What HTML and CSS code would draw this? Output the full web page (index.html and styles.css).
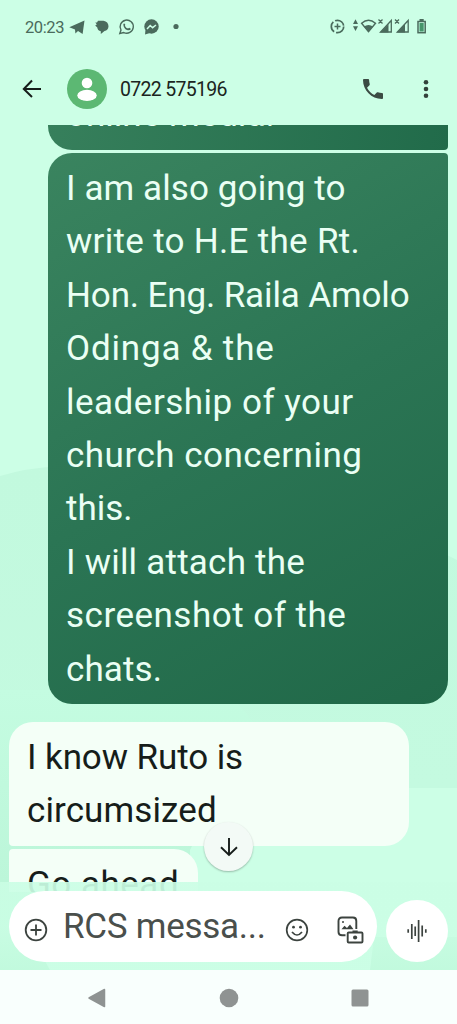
FILE: index.html
```html
<!DOCTYPE html>
<html lang="en">
<head>
<meta charset="utf-8">
<title>Messages</title>
<link rel="stylesheet" href="styles.css">
</head>
<body>
<div class="phone">
  <svg class="wallpaper" viewBox="0 0 457 1024">
    <defs>
      <linearGradient id="blob" x1="0" y1="0" x2="0" y2="1"><stop offset="0" stop-color="#c2f9de"/><stop offset="1" stop-color="#c4fae0"/></linearGradient>
      <linearGradient id="left" x1="0" y1="0" x2="0" y2="1"><stop offset="0" stop-color="#c4fce1"/><stop offset="1" stop-color="#bcf6d9"/></linearGradient>
    </defs>
    <path d="M0 476Q26 468 60 466C200 466 340 500 457 560V788H400L250 722Q240 708 230 703L0 700Z" fill="url(#blob)"/>
    <path d="M0 690H218Q240 702 254 724L190 850V882H0Z" fill="url(#left)"/>
    <path d="M0 882H60Q20 920 50 970H0Z" fill="#a9efc9"/>
    <path d="M374 937H457V970H370Z" fill="#a9efc9"/>
  </svg>
  <header class="status">
    <span class="clock">20:23</span>
    <svg class="status-left" viewBox="68 15 115 24">
      <g fill="#4a6b5c">
        <path d="M69.300 27.200L84.500 20.500L82.600 34L78 31.100L75.400 33.500L75 29.400Z"/>
        <path d="M98 20.700H103.500Q108.300 21.500 108.500 26.200Q108.200 30.500 104.500 31L100.800 34V31.200Q97.500 30.500 97.300 27.500L95.200 25.500L96.800 24.600L95.300 22.600H97Z"/>
        <circle cx="151.500" cy="26.500" r="7.200"/><path d="M145.500 30L145 34.500L150 33Z"/>
        <circle cx="176" cy="26.500" r="2.600"/>
      </g>
      <path d="M119.800 33.500L121 30A6.600 6.600 0 1 1 123.800 32.600Z" fill="none" stroke="#4a6b5c" stroke-width="1.400"/>
      <path d="M123.300 24.200Q124 22.800 125.200 24.300L125 26Q126 28 128 28.600L129.300 27.800L131 29Q129.500 31 127 30Q123.500 28.500 123.300 24.200Z" fill="#4a6b5c"/>
      <path d="M147 29L150.200 25.500L152.600 27.700L156 25" fill="none" stroke="#cdffe7" stroke-width="1.500"/>
    </svg>
    <svg class="status-right" viewBox="328 15 102 24">
      <g fill="none" stroke="#4a6b5c" stroke-width="1.500">
        <circle cx="337.500" cy="26.500" r="6.200" stroke-width="1.700" stroke-dasharray="11 2"/>
        <path d="M334.500 26.500H340.500M337.500 23.500V29.500"/>
        <path d="M361.600 23.300Q368.500 17 375.500 23.300L368.500 31.700Z" stroke-width="1.400"/>
        <path d="M378.500 19.500L382.500 23.500M382.500 19.500L378.500 23.500M395 19.500L399 23.500M399 19.500L395 23.500" stroke-width="1.300"/>
        <path d="M380.500 32H391.300V20.500ZM397.300 32H408.200V20.500Z" stroke-width="1.300"/>
        <rect x="418" y="21.500" width="7.200" height="11.200" stroke-width="1.500"/>
      </g>
      <g fill="#4a6b5c">
        <path d="M353 24L355.500 19.300L358 24ZM353 26.300H358L355.500 31Z"/>
        <path d="M363.800 26.500Q368.500 23.500 373.200 26.500L368.500 32Z"/>
        <path d="M380 32.500L388.500 24V32.500ZM397 32.500L405 24V32.500Z"/>
        <path d="M419.500 19H423.700V21.500H419.500Z"/>
      </g>
      <path d="M419.500 23H423.700V31.500H419.500Z" fill="#45946a"/>
    </svg>
  </header>
  <div class="appbar">
    <svg class="back" viewBox="0 0 20 20"><path d="M19 10H2M10 1.500L1.800 10L10 18" fill="none" stroke="#161d1a" stroke-width="2"/></svg>
    <svg class="avatar" viewBox="0 0 40 40"><circle cx="20" cy="20" r="20" fill="#5cb873"/><circle cx="20" cy="14" r="5.300" fill="#fff"/><ellipse cx="20" cy="26.400" rx="9.700" ry="5.600" fill="#fff"/></svg>
    <span class="name">0722 575196</span>
    <svg class="call" viewBox="3 3 18 18"><path fill="#3b4b43" d="M6.620 10.790c1.440 2.830 3.760 5.140 6.590 6.590l2.200-2.200c.27-.27.67-.36 1.020-.24 1.120.37 2.330.57 3.570.57.550 0 1 .45 1 1V20c0 .55-.45 1-1 1-9.390 0-17-7.610-17-17 0-.55.450-1 1-1h3.500c.55 0 1 .45 1 1 0 1.250.2 2.450.57 3.570.110.350.030.740-.25 1.020z"/></svg>
    <svg class="more" viewBox="0 0 6 20"><g fill="#33423b"><circle cx="3" cy="3.200" r="2.300"/><circle cx="3" cy="10" r="2.300"/><circle cx="3" cy="16.800" r="2.300"/></g></svg>
  </div>
  <main class="chat">
    <div class="bubble sent first"><p>online media.</p></div>
    <div class="bubble sent second">
      <p class="l1">I am also going to</p><p class="l2">write to H.E the Rt.</p><p class="l3">Hon. Eng. Raila Amolo</p><p class="l4">Odinga &amp; the</p><p class="l5">leadership of your</p><p class="l6">church concerning</p><p>this.</p><p class="l8">I will attach the</p><p class="l9">screenshot of the</p><p class="l1">chats.</p>
    </div>
    <div class="bubble got third"><p class="r1">I know Ruto is</p><p class="r2">circumsized</p></div>
    <div class="bubble got fourth"><p class="r3">Go ahead</p></div>
    <div class="jump"><svg viewBox="0 0 20 20"><path d="M10 1V18M2 10.300L10 18L18 10.300" fill="none" stroke="#161d1a" stroke-width="1.900"/></svg></div>
  </main>
  <footer class="composer">
    <div class="field">
      <svg class="plus" viewBox="0 0 24 24"><g fill="none" stroke="#3c433f" stroke-width="1.800"><circle cx="12" cy="12" r="10.300"/><path d="M6.500 12H17.500M12 6.500V17.500"/></g></svg>
      <span class="hint">RCS messa...</span>
      <svg class="smile" viewBox="0 0 24 24"><g fill="none" stroke="#3c433f" stroke-width="1.700"><circle cx="12" cy="12" r="10.300"/><path d="M7 14Q12 20 17 14"/></g><circle cx="8.500" cy="9.200" r="1.400" fill="#3c433f"/><circle cx="15.500" cy="9.200" r="1.400" fill="#3c433f"/></svg>
      <svg class="gallery" viewBox="0 0 27 28"><g fill="none" stroke="#3c433f" stroke-width="1.900"><path d="M8.500 19.300H5Q1.500 19.300 1.500 16V5Q1.500 1.500 5 1.500H16Q19.300 1.500 19.300 5V13"/><rect x="10.700" y="16.500" width="14.800" height="10" rx="1"/></g><path d="M15.500 14.500H20.700V16.500H15.500ZM4.500 13.200L7.500 9.700L10 12L13 8.500L16.500 13.200Z" fill="#3c433f"/><circle cx="6" cy="6" r="1" fill="#3c433f"/><circle cx="18.100" cy="21.500" r="2.100" fill="#3c433f"/></svg>
    </div>
    <div class="voice"><svg viewBox="0 0 20 22"><path d="M1.200 9.300V12.700M4.800 4V19M8.200 6.500V16M11.600 0V22M15.200 5.500V16.500M18.800 9.300V12.700" fill="none" stroke="#3c433f" stroke-width="1.700"/></svg></div>
  </footer>
  <nav class="navbar">
    <svg viewBox="0 0 18 20"><path d="M1 10L16.500 1.500V18.500Z" fill="#8f9392" stroke="#8f9392" stroke-width="1.500" stroke-linejoin="round"/></svg>
    <svg class="home" viewBox="0 0 20 20"><circle cx="10" cy="10" r="9.300" fill="#8f9392"/></svg>
    <svg viewBox="0 0 18 18"><rect x=".5" y=".5" width="17" height="17" rx="1.500" fill="#8f9392"/></svg>
  </nav>
</div>
</body>
</html>
```
FILE: styles.css
```css
* { box-sizing: border-box; }
body { margin: 0; font-family: Roboto, "Noto Sans", sans-serif; }
p { margin: 0; white-space: nowrap; }
svg { display: block; flex: none; }
.phone { position: relative; width: 457px; height: 1024px; background: #ccffe6; display: flex; flex-direction: column; overflow: hidden; }
.wallpaper { position: absolute; inset: 0; width: 457px; height: 1024px; }
.status, .appbar, .chat, .composer, .navbar { position: relative; flex: none; }
.status { height: 54px; padding: 0 27px 0 25px; display: flex; align-items: center; }
.clock { font-size: 16.5px; letter-spacing: -.4px; color: #4a6b5c; width: 43px; white-space: nowrap; }
.status-left { width: 115px; height: 24px; }
.status-right { width: 102px; height: 24px; margin-left: auto; }
.appbar { height: 71px; padding: 0 28px 1px 22px; display: flex; align-items: center; }
.back { width: 20px; height: 20px; }
.avatar { width: 40px; height: 40px; margin-left: 25px; }
.name { margin-left: 13px; font-size: 19.5px; letter-spacing: -.7px; color: #1b2420; }
.call { width: 20px; height: 20px; margin-left: auto; }
.more { width: 6px; height: 20px; margin-left: 40px; }
.chat { height: 767px; overflow: hidden; display: flex; flex-direction: column; padding: 0 9px; }
.bubble { flex: none; padding: 9px 18px 7px; font-size: 35px; line-height: 53.4px; }
.sent { align-self: flex-end; width: 400px; color: #eafff4; }
.first { height: 69px; margin-top: -44px; border-radius: 24px 4px 4px 24px; padding-top: 7px; background: linear-gradient(100deg, #37805c, #216b4a); }
.second { height: 551px; margin-top: 3px; border-radius: 24px 4px 24px 24px; background: linear-gradient(150deg, #3a845f, #2b7554 50%, #206848); }
.got { align-self: flex-start; background: #f4fff7; color: #161d1a; }
.third { width: 400px; height: 124px; margin-top: 18px; border-radius: 24px 24px 24px 4px; }
.fourth { width: 189px; height: 124px; margin-top: 3px; border-radius: 4px 24px 24px 4px; }
.l1, .r2 { letter-spacing: .1px; }
.l2 { letter-spacing: .3px; }
.l3 { letter-spacing: -.13px; }
.l4 { letter-spacing: .82px; }
.l5, .l6, .l9, .r3 { letter-spacing: .5px; }
.l8 { letter-spacing: .22px; }
.r1 { letter-spacing: -.1px; }
.jump { position: absolute; left: 204px; top: 697px; width: 49px; height: 49px; border-radius: 50%; background: #f3faf6; box-shadow: 0 1px 2px #0004; display: grid; place-items: center; }
.jump svg { width: 20px; height: 20px; }
.composer { height: 88px; margin-top: -10px; padding: 9px 9px 8px; background: #cbffe5eb; background: linear-gradient(#cbfee5eb 50%, #cbfee5b8); display: flex; align-items: flex-end; justify-content: space-between; }
.field { width: 368px; height: 71px; border-radius: 36px; background: #fff; padding-left: 15px; display: flex; align-items: center; }
.plus { width: 24px; height: 24px; margin-top: 6px; }
.hint { font-size: 35px; letter-spacing: -.27px; color: #4a4f4c; margin-left: 15px; width: 222px; white-space: nowrap; }
.smile { width: 24px; height: 24px; margin-top: 6px; }
.gallery { width: 27px; height: 28px; margin: 7px 0 0 28px; }
.voice { width: 62px; height: 62px; border-radius: 50%; background: #fff; display: grid; place-items: center; }
.voice svg { width: 20px; height: 22px; }
.navbar { height: 54px; background: #f9fffd; display: flex; align-items: center; justify-content: space-between; padding: 1px 88px 0; }
.navbar svg { width: 18px; height: 20px; }
.navbar .home { width: 20px; }
```
